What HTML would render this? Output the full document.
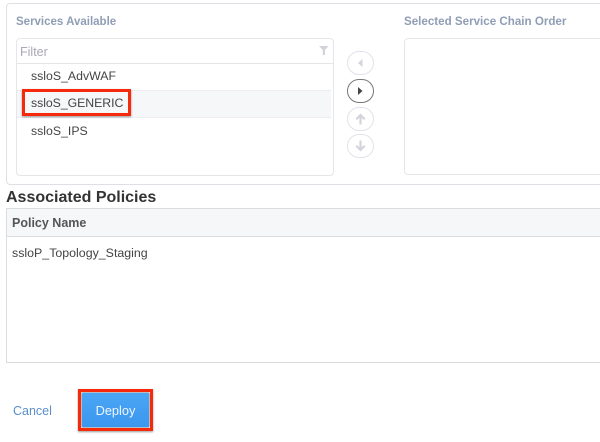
<!DOCTYPE html>
<html>
<head>
<meta charset="utf-8">
<style>
html,body{margin:0;padding:0;background:#fff;}
body{width:600px;height:442px;position:relative;overflow:hidden;font-family:"Liberation Sans",sans-serif;}
#p{left:0;top:0;width:600px;height:442px;filter:blur(.3px);}
div,span{position:absolute;box-sizing:border-box;white-space:nowrap;}
.circ{left:347px;width:27px;height:24px;border:1px solid #e2e2ea;border-radius:12px/12px;background:#fff;}
.it{left:31px;font-size:12.3px;color:#444;line-height:16px;}
</style>
</head>
<body>
<div id="p">
<div style="left:6px;top:3px;width:600px;height:182px;border:1px solid #dfdfe6;border-radius:4px 0 0 4px;"></div>
<div style="left:16px;top:15px;font-size:11.5px;font-weight:bold;color:#8f9db5;line-height:14px;">Services Available</div>
<div style="left:404px;top:15px;font-size:11.6px;font-weight:bold;color:#8f9db5;line-height:14px;">Selected Service Chain Order</div>

<div style="left:16px;top:38px;width:318px;height:138px;border:1px solid #e6e6ea;border-radius:4px;"></div>
<div style="left:17px;top:63px;width:316px;height:1px;background:#e6e6ea;"></div>
<div style="left:20px;top:44px;font-size:12.5px;color:#a9a9b2;line-height:16px;">Filter</div>
<svg style="position:absolute;left:319px;top:46px" width="10" height="10" viewBox="0 0 10 10"><path d="M0 0H9.5L6 4V9H3.8V4Z" fill="#d2d2d8"/></svg>

<div style="left:17px;top:90px;width:314px;height:28px;background:#f6f7f9;border-top:1px dotted #e6e6ea;border-bottom:1px dotted #e6e6ea;"></div>
<div class="it" style="top:68px;">ssloS_AdvWAF</div>
<div class="it" style="top:95px;letter-spacing:-.05px;">ssloS_GENERIC</div>
<div class="it" style="top:123px;">ssloS_IPS</div>
<div style="left:22px;top:89px;width:109px;height:27px;border:3px solid #f62a0a;box-shadow:0 1px 2px rgba(0,0,0,.4);"></div>

<div class="circ" style="top:51px;"></div>
<svg style="position:absolute;left:356px;top:58px" width="8" height="10" viewBox="0 0 8 10"><path d="M6.5 1V9L2 5Z" fill="#d4d4dc"/></svg>
<div class="circ" style="top:79px;border-color:#777;"></div>
<svg style="position:absolute;left:356px;top:86px" width="8" height="10" viewBox="0 0 8 10"><path d="M2 1V9L6.5 5Z" fill="#444"/></svg>
<div class="circ" style="top:107px;"></div>
<svg style="position:absolute;left:354px;top:112px" width="13" height="14" viewBox="0 0 13 14"><path d="M6.5 1.5L11.5 6.5L10 8L7.6 5.7V12.5H5.4V5.7L3 8L1.5 6.5Z" fill="#d4d4dc"/></svg>
<div class="circ" style="top:134px;"></div>
<svg style="position:absolute;left:354px;top:139px" width="13" height="14" viewBox="0 0 13 14"><path d="M6.5 12.5L11.5 7.5L10 6L7.6 8.3V1.5H5.4V8.3L3 6L1.5 7.5Z" fill="#d4d4dc"/></svg>

<div style="left:404px;top:38px;width:210px;height:137px;border:1px solid #e6e6ea;border-radius:4px;"></div>

<div style="left:6px;top:189px;font-size:16px;font-weight:bold;color:#333;line-height:18px;">Associated Policies</div>
<div style="left:6px;top:208px;width:600px;height:155px;border:1px solid #dcdcdc;"></div>
<div style="left:7px;top:209px;width:593px;height:28px;background:#f6f7f9;border-bottom:1px solid #dcdfe2;"></div>
<div style="left:12px;top:215px;font-size:12.5px;font-weight:bold;color:#555;line-height:16px;">Policy Name</div>
<div style="left:12px;top:245px;font-size:12.4px;color:#444;line-height:16px;">ssloP_Topology_Staging</div>

<div style="left:13px;top:403px;font-size:12.5px;color:#5b8fc9;line-height:16px;">Cancel</div>
<div style="left:78px;top:389px;width:75px;height:42px;border:3px solid #f62a0a;box-shadow:0 1px 2px rgba(0,0,0,.4);"></div>
<div style="left:81px;top:392px;width:69px;height:36px;background:linear-gradient(#4aa6f5,#3b96ee);border:1px solid #b5bcc4;border-radius:2px;color:#eef6ff;font-size:12.8px;line-height:36px;text-align:center;">Deploy</div>
</div>
</body>
</html>
